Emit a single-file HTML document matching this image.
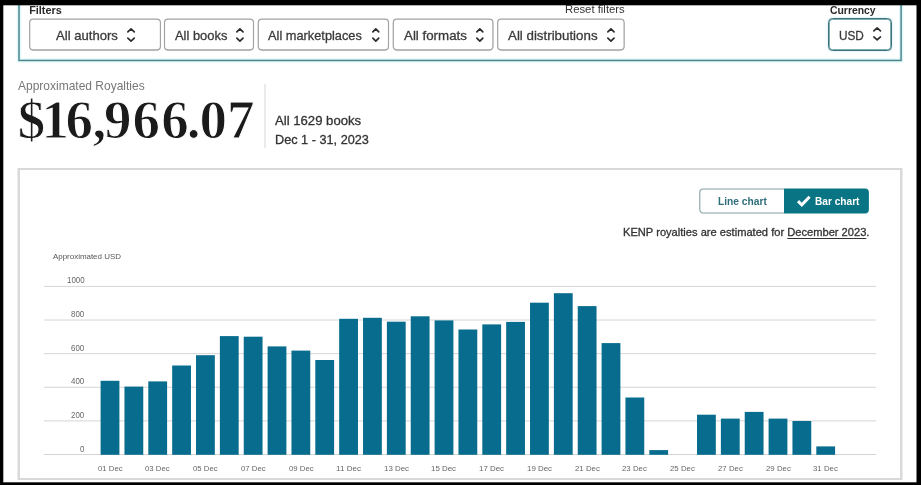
<!DOCTYPE html>
<html lang="en">
<head>
<meta charset="utf-8">
<title>KDP Reports - Royalties Estimator</title>
<style>
html,body{margin:0;padding:0;}
body{width:921px;height:485px;position:relative;overflow:hidden;background:#fff;font-family:"Liberation Sans",sans-serif;}
#app{position:absolute;left:0;top:0;width:921px;height:485px;overflow:hidden;will-change:transform;}
.a{position:absolute;display:block;}
.t{position:absolute;display:block;line-height:1;white-space:nowrap;}
.sf{font-family:"Liberation Serif",serif;}
.u{text-decoration:underline;text-decoration-thickness:1px;text-underline-offset:1.5px;}
.btn{position:absolute;box-sizing:border-box;background:#fff;}
</style>
</head>
<body>
<main id="app">

<section aria-label="Filters">
<svg class="a" style="left:0;top:0" width="921" height="70" viewBox="0 0 921 70"><rect x="19" y="-10" width="882.1" height="70.45" fill="none" stroke="#9fe3e8" stroke-opacity=".3" stroke-width="4.5"/><rect x="19" y="-10" width="882.1" height="70.45" fill="none" stroke="#4a838b" stroke-width="1.45"/></svg>
<span class="t" style="left:29.15px;top:4.77px;font-size:10.90px;color:#2a2a2a;font-weight:bold;transform-origin:0 0;transform:scaleX(1.0000);">Filters</span>
<span class="t" style="left:564.61px;top:4.00px;font-size:11.10px;color:#333;transform-origin:0 0;transform:scaleX(1.0201);">Reset filters</span>
<span class="t" style="left:829.73px;top:5.33px;font-size:10.60px;color:#2a2a2a;font-weight:bold;transform-origin:0 0;transform:scaleX(0.9799);">Currency</span>
<svg class="a" style="left:0;top:0" width="921" height="70" viewBox="0 0 921 70">
<rect x="29.70" y="19.6" width="130.70" height="31" rx="3.5" fill="none" stroke="#000" stroke-opacity=".2" stroke-width="1"/>
<rect x="29.70" y="19.05" width="130.70" height="30.8" rx="3.5" fill="#fff" stroke="#a2a2a2" stroke-width="1.15"/>
<rect x="164.50" y="19.6" width="89.00" height="31" rx="3.5" fill="none" stroke="#000" stroke-opacity=".2" stroke-width="1"/>
<rect x="164.50" y="19.05" width="89.00" height="30.8" rx="3.5" fill="#fff" stroke="#a2a2a2" stroke-width="1.15"/>
<rect x="258.30" y="19.6" width="130.20" height="31" rx="3.5" fill="none" stroke="#000" stroke-opacity=".2" stroke-width="1"/>
<rect x="258.30" y="19.05" width="130.20" height="30.8" rx="3.5" fill="#fff" stroke="#a2a2a2" stroke-width="1.15"/>
<rect x="393.30" y="19.6" width="99.60" height="31" rx="3.5" fill="none" stroke="#000" stroke-opacity=".2" stroke-width="1"/>
<rect x="393.30" y="19.05" width="99.60" height="30.8" rx="3.5" fill="#fff" stroke="#a2a2a2" stroke-width="1.15"/>
<rect x="497.70" y="19.6" width="126.40" height="31" rx="3.5" fill="none" stroke="#000" stroke-opacity=".2" stroke-width="1"/>
<rect x="497.70" y="19.05" width="126.40" height="30.8" rx="3.5" fill="#fff" stroke="#a2a2a2" stroke-width="1.15"/>
</svg>
<span class="t" style="left:55.80px;top:28.80px;font-size:13.00px;color:#3a3a3a;transform-origin:0 0;transform:scaleX(1.0082);-webkit-text-stroke:0.3px currentColor;">All authors</span>
<svg class="a" style="left:124.70px;top:25.60px" width="12.10" height="18.00" viewBox="0 0 12.10 18.00"><path d="M2.85 5.85 L6.05 2.85 L9.25 5.85 M2.85 12.15 L6.05 15.15 L9.25 12.15" fill="none" stroke="#2b2b2b" stroke-width="1.70" stroke-linecap="round" stroke-linejoin="round"/></svg>
<span class="t" style="left:174.80px;top:28.80px;font-size:13.00px;color:#3a3a3a;transform-origin:0 0;transform:scaleX(0.9933);-webkit-text-stroke:0.3px currentColor;">All books</span>
<svg class="a" style="left:234.30px;top:25.60px" width="11.90" height="18.00" viewBox="0 0 11.90 18.00"><path d="M2.85 5.85 L5.95 2.85 L9.05 5.85 M2.85 12.15 L5.95 15.15 L9.05 12.15" fill="none" stroke="#2b2b2b" stroke-width="1.70" stroke-linecap="round" stroke-linejoin="round"/></svg>
<span class="t" style="left:268.20px;top:28.80px;font-size:13.00px;color:#3a3a3a;transform-origin:0 0;transform:scaleX(0.9845);-webkit-text-stroke:0.3px currentColor;">All marketplaces</span>
<svg class="a" style="left:369.60px;top:25.60px" width="11.60" height="18.00" viewBox="0 0 11.60 18.00"><path d="M2.85 5.85 L5.80 2.85 L8.75 5.85 M2.85 12.15 L5.80 15.15 L8.75 12.15" fill="none" stroke="#2b2b2b" stroke-width="1.70" stroke-linecap="round" stroke-linejoin="round"/></svg>
<span class="t" style="left:403.70px;top:28.80px;font-size:13.00px;color:#3a3a3a;transform-origin:0 0;transform:scaleX(1.0246);-webkit-text-stroke:0.3px currentColor;">All formats</span>
<svg class="a" style="left:473.60px;top:25.60px" width="11.70" height="18.00" viewBox="0 0 11.70 18.00"><path d="M2.85 5.85 L5.85 2.85 L8.85 5.85 M2.85 12.15 L5.85 15.15 L8.85 12.15" fill="none" stroke="#2b2b2b" stroke-width="1.70" stroke-linecap="round" stroke-linejoin="round"/></svg>
<span class="t" style="left:507.90px;top:28.80px;font-size:13.00px;color:#3a3a3a;transform-origin:0 0;transform:scaleX(1.0241);-webkit-text-stroke:0.3px currentColor;">All distributions</span>
<svg class="a" style="left:604.50px;top:25.60px" width="11.90" height="18.00" viewBox="0 0 11.90 18.00"><path d="M2.85 5.85 L5.95 2.85 L9.05 5.85 M2.85 12.15 L5.95 15.15 L9.05 12.15" fill="none" stroke="#2b2b2b" stroke-width="1.70" stroke-linecap="round" stroke-linejoin="round"/></svg>
<div class="btn" style="left:828.4px;top:18px;width:63.3px;height:33px;border:1px solid #41717e;border-radius:4.5px;box-shadow:inset 0 0 0 1px rgba(80,145,150,.75),0 0 2.5px rgba(90,200,205,.45)"></div>
<span class="t" style="left:839.33px;top:28.79px;font-size:13.60px;color:#3a3a3a;transform-origin:0 0;transform:scaleX(0.8667);-webkit-text-stroke:0.3px currentColor;">USD</span>
<svg class="a" style="left:870.90px;top:25.20px" width="12.30" height="17.80" viewBox="0 0 12.30 17.80"><path d="M2.85 5.85 L6.15 2.85 L9.45 5.85 M2.85 11.95 L6.15 14.95 L9.45 11.95" fill="none" stroke="#2b2b2b" stroke-width="1.70" stroke-linecap="round" stroke-linejoin="round"/></svg>
</section>
<section aria-label="Approximated royalties summary">
<span class="t" style="left:18.30px;top:81.43px;font-size:11.90px;color:#777;transform-origin:0 0;transform:scaleX(1.0086);">Approximated Royalties</span>
<span class="t sf" style="left:17.81px;top:92.44px;font-size:55.00px;color:#1b1b1b;font-weight:bold;-webkit-text-stroke:1px #fff;"><span style="letter-spacing:-3.81px">$</span><span style="letter-spacing:-3.42px">1</span><span style="letter-spacing:-0.71px">6</span><span style="letter-spacing:-2.21px">,</span><span style="letter-spacing:1.03px">9</span><span style="letter-spacing:1.15px">6</span><span style="letter-spacing:-2.00px">6</span><span style="letter-spacing:-0.77px">.</span><span style="letter-spacing:-0.03px">0</span>7</span>
<div class="a" style="left:264px;top:84px;width:2px;height:64px;background:#ebebeb"></div>
<span class="t" style="left:274.50px;top:114.00px;font-size:13.00px;color:#333;transform-origin:0 0;transform:scaleX(1.0097);-webkit-text-stroke:0.3px currentColor;">All 1629 books</span>
<span class="t" style="left:274.52px;top:132.90px;font-size:13.00px;color:#333;transform-origin:0 0;transform:scaleX(0.9767);-webkit-text-stroke:0.3px currentColor;">Dec 1 - 31, 2023</span>
</section>
<section aria-label="Royalties bar chart">
<div class="a" style="left:18px;top:168px;width:884px;height:312px;box-sizing:border-box;border:2px solid #d9d9d9;box-shadow:-1px 0 0 #eee,1px 0 0 #eee;"></div>
<svg class="a" style="left:690px;top:180px" width="190" height="42" viewBox="690 180 190 42"><path d="M784 188.4 H864.9 a4 4 0 0 1 4 4 V209.6 a4 4 0 0 1 -4 4 H784 Z" fill="#087484"/><path d="M784 188.95 H703.3 a3.5 3.5 0 0 0 -3.5 3.5 V209.55 a3.5 3.5 0 0 0 3.5 3.5 H784" fill="none" stroke="#86a0a4" stroke-width="1.1"/></svg>
<span class="t" style="left:717.60px;top:196.17px;font-size:10.90px;color:#2f6f7b;font-weight:bold;transform-origin:0 0;transform:scaleX(0.9389);">Line chart</span>
<span class="t" style="left:815.20px;top:196.17px;font-size:10.90px;color:#fff;font-weight:bold;transform-origin:0 0;transform:scaleX(0.9298);">Bar chart</span>
<svg class="a" style="left:795.5px;top:195.2px" width="16" height="12" viewBox="0 0 16 12"><path d="M2 6.2 L5.8 9.8 L13.6 1.8" fill="none" stroke="#fff" stroke-width="3" stroke-linecap="butt" stroke-linejoin="miter"/></svg>
<span class="t" style="left:622.92px;top:227.40px;font-size:11.10px;color:#333;transform-origin:0 0;transform:scaleX(1.0025);-webkit-text-stroke:0.3px currentColor;">KENP royalties are estimated for <span class="u">December 2023</span>.</span>
<span class="t" style="left:52.70px;top:253.35px;font-size:7.86px;color:#555;transform-origin:0 0;transform:scaleX(1.0093);">Approximated USD</span>
<svg class="a" style="left:0;top:0" width="921" height="485" viewBox="0 0 921 485">
<rect x="44" y="285.90" width="832.2" height="1" fill="#d6d6d6"/>
<rect x="44" y="319.52" width="832.2" height="1" fill="#d6d6d6"/>
<rect x="44" y="353.14" width="832.2" height="1" fill="#d6d6d6"/>
<rect x="44" y="386.76" width="832.2" height="1" fill="#d6d6d6"/>
<rect x="44" y="420.38" width="832.2" height="1" fill="#d6d6d6"/>
<rect x="44" y="454.00" width="832.2" height="1" fill="#d6d6d6"/>
<rect x="100.60" y="380.80" width="18.80" height="74.00" fill="#076c8d"/>
<rect x="124.46" y="386.60" width="18.80" height="68.20" fill="#076c8d"/>
<rect x="148.31" y="381.40" width="18.80" height="73.40" fill="#076c8d"/>
<rect x="172.17" y="365.50" width="18.80" height="89.30" fill="#076c8d"/>
<rect x="196.03" y="355.20" width="18.80" height="99.60" fill="#076c8d"/>
<rect x="219.88" y="336.10" width="18.80" height="118.70" fill="#076c8d"/>
<rect x="243.74" y="336.70" width="18.80" height="118.10" fill="#076c8d"/>
<rect x="267.60" y="346.40" width="18.80" height="108.40" fill="#076c8d"/>
<rect x="291.46" y="350.60" width="18.80" height="104.20" fill="#076c8d"/>
<rect x="315.31" y="360.00" width="18.80" height="94.80" fill="#076c8d"/>
<rect x="339.17" y="318.80" width="18.80" height="136.00" fill="#076c8d"/>
<rect x="363.03" y="317.80" width="18.80" height="137.00" fill="#076c8d"/>
<rect x="386.88" y="321.70" width="18.80" height="133.10" fill="#076c8d"/>
<rect x="410.74" y="316.30" width="18.80" height="138.50" fill="#076c8d"/>
<rect x="434.60" y="320.40" width="18.80" height="134.40" fill="#076c8d"/>
<rect x="458.46" y="329.50" width="18.80" height="125.30" fill="#076c8d"/>
<rect x="482.31" y="324.40" width="18.80" height="130.40" fill="#076c8d"/>
<rect x="506.17" y="321.90" width="18.80" height="132.90" fill="#076c8d"/>
<rect x="530.03" y="302.70" width="18.80" height="152.10" fill="#076c8d"/>
<rect x="553.88" y="293.20" width="18.80" height="161.60" fill="#076c8d"/>
<rect x="577.74" y="306.10" width="18.80" height="148.70" fill="#076c8d"/>
<rect x="601.60" y="343.10" width="18.80" height="111.70" fill="#076c8d"/>
<rect x="625.45" y="397.50" width="18.80" height="57.30" fill="#076c8d"/>
<rect x="649.31" y="450.10" width="18.80" height="4.70" fill="#076c8d"/>
<rect x="697.02" y="414.70" width="18.80" height="40.10" fill="#076c8d"/>
<rect x="720.88" y="418.60" width="18.80" height="36.20" fill="#076c8d"/>
<rect x="744.74" y="411.90" width="18.80" height="42.90" fill="#076c8d"/>
<rect x="768.60" y="418.60" width="18.80" height="36.20" fill="#076c8d"/>
<rect x="792.45" y="421.00" width="18.80" height="33.80" fill="#076c8d"/>
<rect x="816.31" y="446.40" width="18.80" height="8.40" fill="#076c8d"/>
</svg>
<span class="t" style="left:66.85px;top:276.47px;font-size:8.30px;color:#666;transform-origin:0 0;transform:scaleX(0.9518);">1000</span>
<span class="t" style="left:71.25px;top:310.09px;font-size:8.30px;color:#666;transform-origin:0 0;transform:scaleX(0.9518);">800</span>
<span class="t" style="left:71.25px;top:343.71px;font-size:8.30px;color:#666;transform-origin:0 0;transform:scaleX(0.9518);">600</span>
<span class="t" style="left:71.25px;top:377.33px;font-size:8.30px;color:#666;transform-origin:0 0;transform:scaleX(0.9518);">400</span>
<span class="t" style="left:71.25px;top:410.95px;font-size:8.30px;color:#666;transform-origin:0 0;transform:scaleX(0.9518);">200</span>
<span class="t" style="left:80.05px;top:444.57px;font-size:8.30px;color:#666;transform-origin:0 0;transform:scaleX(0.9518);">0</span>
<span class="t" style="left:97.66px;top:465.44px;font-size:8.10px;color:#666;transform-origin:0 0;transform:scaleX(0.9632);">01 Dec</span>
<span class="t" style="left:145.37px;top:465.44px;font-size:8.10px;color:#666;transform-origin:0 0;transform:scaleX(0.9632);">03 Dec</span>
<span class="t" style="left:193.09px;top:465.44px;font-size:8.10px;color:#666;transform-origin:0 0;transform:scaleX(0.9632);">05 Dec</span>
<span class="t" style="left:240.80px;top:465.44px;font-size:8.10px;color:#666;transform-origin:0 0;transform:scaleX(0.9632);">07 Dec</span>
<span class="t" style="left:288.52px;top:465.44px;font-size:8.10px;color:#666;transform-origin:0 0;transform:scaleX(0.9632);">09 Dec</span>
<span class="t" style="left:335.85px;top:465.44px;font-size:8.10px;color:#666;transform-origin:0 0;transform:scaleX(0.9979);">11 Dec</span>
<span class="t" style="left:383.57px;top:465.44px;font-size:8.10px;color:#666;transform-origin:0 0;transform:scaleX(0.9778);">13 Dec</span>
<span class="t" style="left:431.29px;top:465.44px;font-size:8.10px;color:#666;transform-origin:0 0;transform:scaleX(0.9778);">15 Dec</span>
<span class="t" style="left:479.00px;top:465.44px;font-size:8.10px;color:#666;transform-origin:0 0;transform:scaleX(0.9778);">17 Dec</span>
<span class="t" style="left:526.71px;top:465.44px;font-size:8.10px;color:#666;transform-origin:0 0;transform:scaleX(0.9778);">19 Dec</span>
<span class="t" style="left:574.68px;top:465.44px;font-size:8.10px;color:#666;transform-origin:0 0;transform:scaleX(0.9680);">21 Dec</span>
<span class="t" style="left:622.39px;top:465.44px;font-size:8.10px;color:#666;transform-origin:0 0;transform:scaleX(0.9680);">23 Dec</span>
<span class="t" style="left:670.10px;top:465.44px;font-size:8.10px;color:#666;transform-origin:0 0;transform:scaleX(0.9680);">25 Dec</span>
<span class="t" style="left:717.82px;top:465.44px;font-size:8.10px;color:#666;transform-origin:0 0;transform:scaleX(0.9680);">27 Dec</span>
<span class="t" style="left:765.53px;top:465.44px;font-size:8.10px;color:#666;transform-origin:0 0;transform:scaleX(0.9680);">29 Dec</span>
<span class="t" style="left:813.25px;top:465.44px;font-size:8.10px;color:#666;transform-origin:0 0;transform:scaleX(0.9680);">31 Dec</span>
</section>
<div class="a" style="left:0;top:0;width:921px;height:5px;background:#000"></div>
<div class="a" style="left:0;top:5px;width:921px;height:1px;background:rgba(0,0,0,.3)"></div>
<div class="a" style="left:0;top:0;width:3px;height:485px;background:#000"></div>
<div class="a" style="left:3px;top:0;width:1px;height:485px;background:rgba(0,0,0,.3)"></div>
<div class="a" style="left:917px;top:0;width:4px;height:485px;background:#000"></div>
<div class="a" style="left:916px;top:0;width:1px;height:485px;background:rgba(0,0,0,.5)"></div>
<div class="a" style="left:0;top:483px;width:921px;height:2px;background:#000"></div>
<div class="a" style="left:0;top:482px;width:921px;height:1px;background:rgba(0,0,0,.7)"></div>
</main>
</body>
</html>
